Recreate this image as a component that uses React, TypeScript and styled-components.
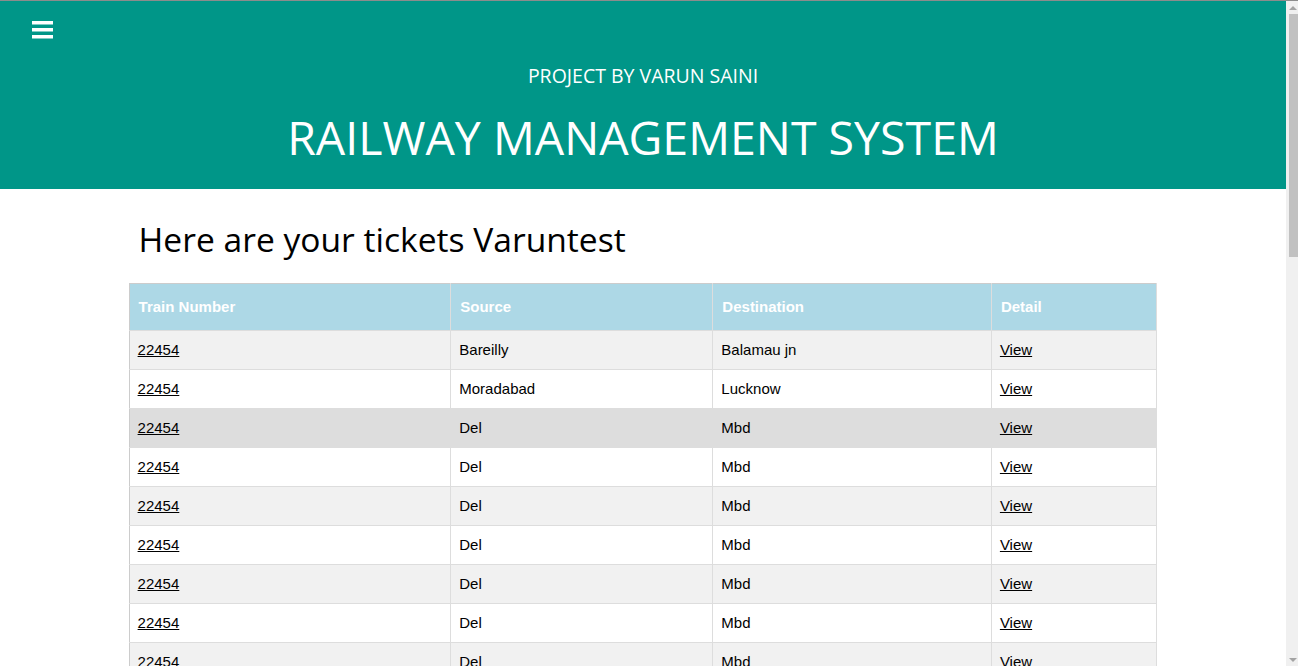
import React from "react";
import styled, { createGlobalStyle } from "styled-components";

const GlobalStyle = createGlobalStyle`
  html, body { margin: 0; padding: 0; background: #fff; }
  body { font-family: "Open Sans", "Noto Sans", sans-serif; color: #000; padding-right: 12px; }
`;

const ScrollRail = styled.div`
  position: fixed;
  top: 0;
  right: 0;
  width: 12px;
  height: 100vh;
  background: #f0f0f0;
  border-top: 1px solid #8c8c8c;
  box-sizing: border-box;
  display: flex;
  flex-direction: column;
  align-items: stretch;
  z-index: 10;
`;

const RailArrow = styled.div<{ $down?: boolean }>`
  height: 13px;
  display: flex;
  align-items: center;
  justify-content: center;
  margin-left: 2px;
  &::after {
    content: "";
    width: 0;
    height: 0;
    border-left: 4px solid transparent;
    border-right: 4px solid transparent;
    ${(p) =>
      p.$down
        ? "border-top: 4px solid #a3a3a3;"
        : "border-bottom: 4px solid #a3a3a3;"}
  }
`;

const RailThumb = styled.div`
  height: 243px;
  margin-left: 3px;
  background: #c1c1c1;
`;

const RailSpace = styled.div`
  flex: 1;
`;

const Header = styled.header`
  background: #009688;
  color: #fff;
  border-top: 1px solid #8c8c8c;
  height: 188px;
  display: flex;
  flex-direction: column;
`;

const MenuRow = styled.div`
  height: 54px;
  display: flex;
  align-items: flex-start;
  padding: 19px 0 0 32px;
  box-sizing: border-box;
`;

const MenuButton = styled.button`
  background: none;
  border: none;
  padding: 0;
  width: 21px;
  height: 19px;
  cursor: pointer;
  display: block;
`;

const Subtitle = styled.div`
  text-align: center;
  font-size: 19.5px;
  line-height: 27px;
  margin-top: 7px;
`;

const Title = styled.h1`
  text-align: center;
  font-weight: 400;
  font-size: 46.5px;
  line-height: 56px;
  margin: 20px 0 0;
`;

const Container = styled.main`
  width: 80%;
  margin: 0 auto;
`;

const Heading = styled.h2`
  font-weight: 400;
  font-size: 33.6px;
  line-height: 48px;
  margin: 26px 0 20px 10px;
`;

const Table = styled.table`
  width: 100%;
  border-collapse: collapse;
  border: 1px solid #ccc;
  font-family: "Liberation Sans", Arial, sans-serif;
  font-size: 15px;
  margin-bottom: 16px;
`;

const HeadCell = styled.th<{ $w: string }>`
  width: ${(p) => p.$w};
  background: #add8e6;
  color: #fff;
  font-weight: 700;
  text-align: left;
  padding: 12px 8px 12px 9px;
  line-height: 22px;
  border-right: 1px solid #ddd;
  border-bottom: 1px solid #ddd;
`;

const Row = styled.tr<{ $odd: boolean; $hover: boolean }>`
  background: ${(p) => (p.$hover ? "#dddddd" : p.$odd ? "#f1f1f1" : "#ffffff")};
  border-bottom: 1px solid #ddd;
`;

const Cell = styled.td`
  padding: 8px;
  line-height: 22px;
  border-right: 1px solid #ddd;
  color: #000;
`;

const Link = styled.a`
  color: #000;
  text-decoration: underline;
`;

const MenuIcon = () => (
  <svg width="21" height="19" viewBox="0 0 21 19">
    <rect x="0" y="1" width="21" height="3.5" fill="#fff" />
    <rect x="0" y="8" width="21" height="3.5" fill="#fff" />
    <rect x="0" y="15" width="21" height="3.5" fill="#fff" />
  </svg>
);

const tickets = [
  { src: "Bareilly", dst: "Balamau jn" },
  { src: "Moradabad", dst: "Lucknow" },
  ...Array.from({ length: 34 }, () => ({ src: "Del", dst: "Mbd" })),
];

export default function App() {
  return (
    <>
      <GlobalStyle />
      <ScrollRail aria-hidden="true">
        <RailArrow />
        <RailThumb />
        <RailSpace />
        <RailArrow $down />
      </ScrollRail>
      <Header>
        <MenuRow>
          <MenuButton aria-label="menu">
            <MenuIcon />
          </MenuButton>
        </MenuRow>
        <Subtitle>PROJECT BY VARUN SAINI</Subtitle>
        <Title>RAILWAY MANAGEMENT SYSTEM</Title>
      </Header>
      <Container>
        <Heading>Here are your tickets Varuntest</Heading>
        <Table>
          <thead>
            <tr>
              <HeadCell $w="31.3%">Train Number</HeadCell>
              <HeadCell $w="25.5%">Source</HeadCell>
              <HeadCell $w="27.1%">Destination</HeadCell>
              <HeadCell $w="16.1%">Detail</HeadCell>
            </tr>
          </thead>
          <tbody>
            {tickets.map((t, i) => (
              <Row key={i} $odd={i % 2 === 0} $hover={i === 2}>
                <Cell>
                  <Link href="#">22454</Link>
                </Cell>
                <Cell>{t.src}</Cell>
                <Cell>{t.dst}</Cell>
                <Cell>
                  <Link href="#">View</Link>
                </Cell>
              </Row>
            ))}
          </tbody>
        </Table>
      </Container>
    </>
  );
}
